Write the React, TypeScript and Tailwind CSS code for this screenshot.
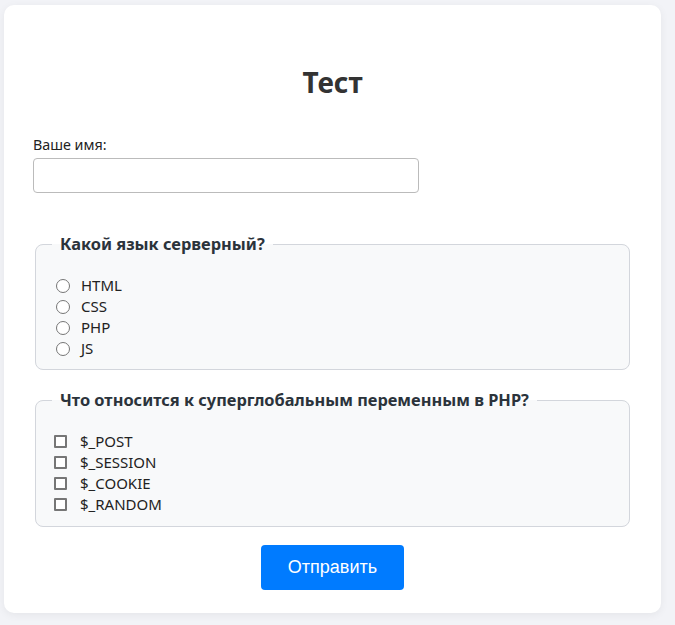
import { useState } from 'react';

const langs = ['HTML', 'CSS', 'PHP', 'JS'];
const globals = ['$_POST', '$_SESSION', '$_COOKIE', '$_RANDOM'];

export default function App() {
  const [name, setName] = useState('');

  return (
    <div className="min-h-[625px] bg-[#f2f3f7] pt-[5px] pl-[4px] text-[#222] font-['Noto_Sans',sans-serif]">
      <form
        className="w-[657px] rounded-[10px] bg-white px-[29px] pt-[60px] pb-[23px] shadow-[0_2px_8px_rgba(0,0,0,0.06)]"
        onSubmit={(e) => e.preventDefault()}
      >
        <h1 className="text-center text-[28px] font-bold leading-[34px] text-[#333]">Тест</h1>

        {/* Name field */}
        <label className="mt-[36px] block text-[14.3px] leading-[20px]">Ваше имя:</label>
        <input
          type="text"
          value={name}
          onChange={(e) => setName(e.target.value)}
          className="mt-[3px] block h-[35px] w-[386px] rounded-[4px] border border-[#bbb] px-2 text-[15px] outline-none"
        />

        {/* Radio question */}
        <fieldset className="mx-[2px] mt-[39px] rounded-[8px] border border-[#d3d6dc] bg-[#f8f9fa] px-4 pt-[19px] pb-[10px]">
          <legend className="px-2 text-[16.4px] font-bold leading-[24px] text-[#2b333b]">Какой язык серверный?</legend>
          {langs.map((l) => (
            <label key={l} className="flex h-[21px] items-center gap-[11px] pl-[4px] text-[15px]">
              <input
                type="radio"
                name="lang"
                value={l}
                className="m-0 h-[14px] w-[14px] appearance-none rounded-full border-[1.5px] border-[#767676] bg-white checked:border-[4px] checked:border-[#007bff]"
              />
              {l}
            </label>
          ))}
        </fieldset>

        {/* Checkbox question */}
        <fieldset className="mx-[2px] mt-[18px] rounded-[8px] border border-[#d3d6dc] bg-[#f8f9fa] px-4 pt-[19px] pb-[11px]">
          <legend className="px-2 text-[16.4px] font-bold leading-[24px] text-[#2b333b]">
            Что относится к суперглобальным переменным в PHP?
          </legend>
          {globals.map((g) => (
            <label key={g} className="flex h-[21px] items-center gap-[13px] pl-[2px] text-[15px]">
              <input
                type="checkbox"
                value={g}
                className="m-0 h-[13px] w-[13px] appearance-none rounded-[1px] border-2 border-[#767676] bg-white checked:border-[#007bff] checked:bg-[#007bff]"
              />
              {g}
            </label>
          ))}
        </fieldset>

        <div className="mt-[18px] flex justify-center">
          <button
            type="submit"
            className="h-[45px] w-[143px] rounded-[4px] bg-[#007bff] text-[18px] text-white font-['Liberation_Sans',sans-serif]"
          >
            Отправить
          </button>
        </div>
      </form>
    </div>
  );
}
